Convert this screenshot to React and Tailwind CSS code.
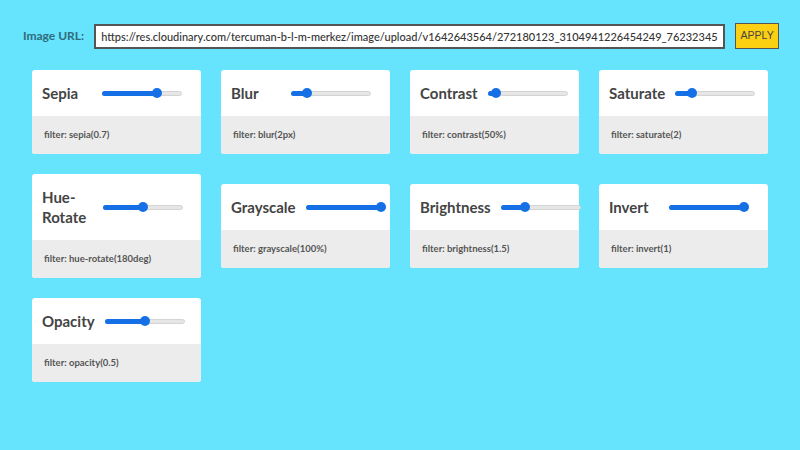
import React from "react";

const filters = [
  { name: "Sepia", value: 0.71, css: "sepia(0.7)" },
  { name: "Blur", value: 0.15, css: "blur(2px)" },
  { name: "Contrast", value: 0.05, css: "contrast(50%)" },
  { name: "Saturate", value: 0.17, css: "saturate(2)" },
  { name: "Hue-Rotate", value: 0.5, css: "hue-rotate(180deg)" },
  { name: "Grayscale", value: 1, css: "grayscale(100%)" },
  { name: "Brightness", value: 0.27, css: "brightness(1.5)" },
  { name: "Invert", value: 1, css: "invert(1)" },
  { name: "Opacity", value: 0.5, css: "opacity(0.5)" },
];

function Slider({ value }) {
  // thumb travels 70px inside an 80px track
  const x = 5 + value * 70;
  return (
    <div className="relative w-[80px] h-[10px] mr-[8px] shrink-0 flex items-center">
      <div className="w-full h-[5px] rounded-full bg-[#e6e6e6] border border-[#d4d4d4]" />
      <div
        className="absolute left-0 h-[5px] rounded-full bg-[#1570e6]"
        style={{ width: x }}
      />
      <div
        className="absolute top-0 w-[10px] h-[10px] rounded-full bg-[#1570e6]"
        style={{ left: x - 5 }}
      />
    </div>
  );
}

function FilterCard({ filter }) {
  return (
    <div className="w-[169px] bg-white rounded-[3px]">
      <div className="flex items-center px-[10px] py-[13px]">
        <h2 className="mr-[10px] text-[15px] leading-[20px] font-bold text-[#444]">
          <div className="min-w-[50px]">{filter.name}</div>
        </h2>
        <Slider value={filter.value} />
      </div>
      <div className="h-[38px] flex items-center px-[12px] bg-[#ececec] rounded-b-[3px] text-[9.5px] font-bold text-[#555]">
        filter: {filter.css}
      </div>
    </div>
  );
}

export default function App() {
  return (
    <div
      className="w-[800px] h-[450px] bg-[#66e3fd] overflow-hidden"
      style={{ fontFamily: "Lato, 'Open Sans', sans-serif" }}
    >
      <div className="flex items-center pt-[23px] pl-[23px]">
        <label className="text-[12px] font-bold text-[#2e6c7c] mr-[10px]">
          Image URL:
        </label>
        <input
          readOnly
          value="https://res.cloudinary.com/tercuman-b-l-m-merkez/image/upload/v1642643564/272180123_3104941226454249_7623234523478561234_n.jpg"
          className="w-[631px] h-[25px] border-2 border-[#555] bg-white px-[5px] text-[11px] font-medium text-[#333] outline-none"
        />
        <button
          className="ml-[10px] w-[44px] h-[26px] bg-[#fcd012] border border-[#555] text-[10.5px] text-[#444]"
          style={{ fontFamily: "'Liberation Sans', Arial, sans-serif" }}
        >
          APPLY
        </button>
      </div>
      <div className="flex flex-wrap items-center gap-[20px] px-[32px] pt-[21px]">
        {filters.map((f) => (
          <FilterCard key={f.name} filter={f} />
        ))}
      </div>
    </div>
  );
}
